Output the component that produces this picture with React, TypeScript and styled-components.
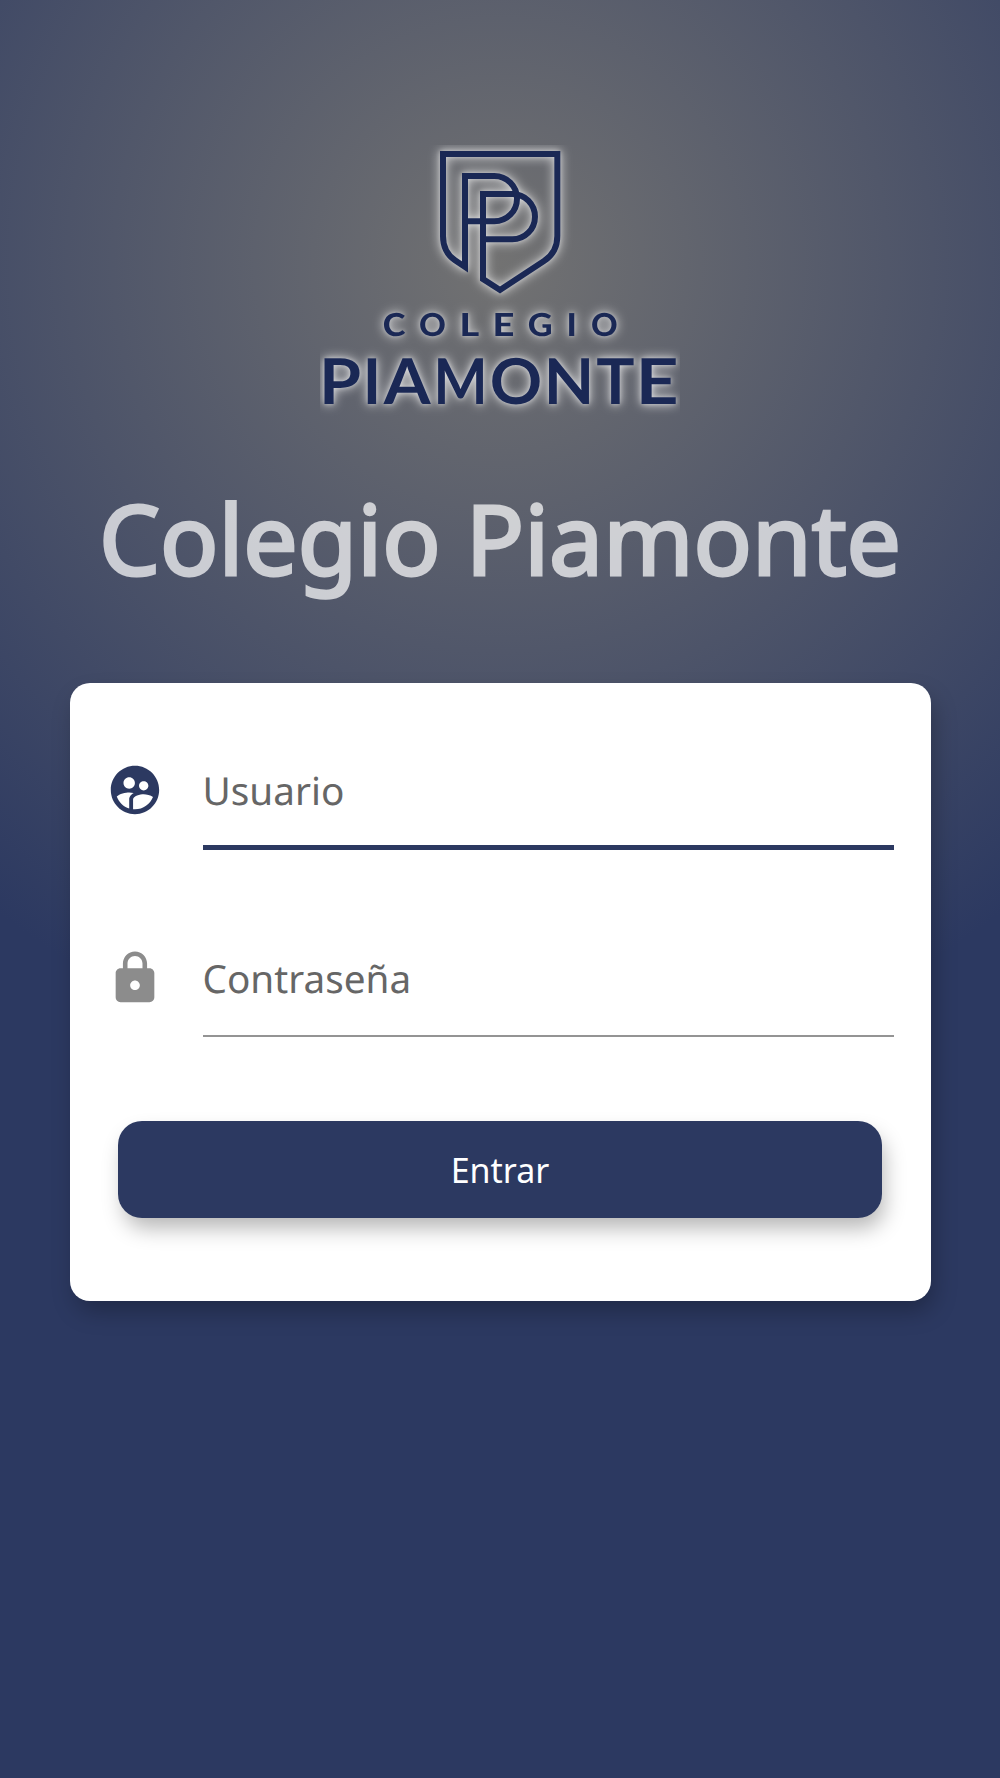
import React from 'react';
import styled, { createGlobalStyle } from 'styled-components';
import { MdLock, MdSupervisedUserCircle } from 'react-icons/md';

const navy = '#2c3961';
const logoBlue = '#1a2855';

const GlobalStyle = createGlobalStyle`
  *, *::before, *::after { box-sizing: border-box; }
  body {
    margin: 0;
    background: ${navy};
    font-family: "Noto Sans", "Open Sans", sans-serif;
    text-rendering: geometricPrecision;
  }
`;

const Page = styled.main`
  display: flex;
  flex-direction: column;
  align-items: center;
  min-height: 1778px;
  padding-top: 145px;
  background: radial-gradient(circle 820px at 50% 264px, #727272 0%, ${navy} 100%);
`;

const Logo = styled.svg`
  display: block;
  flex: none;
  width: 360px;
  height: 276px;
  overflow: hidden;
`;

const Glow = styled.g`
  filter: drop-shadow(0 0 2px rgba(255, 255, 255, 0.4)) drop-shadow(0 0 5.5px rgba(255, 255, 255, 0.8));
`;

const LogoText = styled.text<{ $size: number; $weight: number }>`
  font-family: Lato, sans-serif;
  font-size: ${(p) => p.$size}px;
  font-weight: ${(p) => p.$weight};
  fill: ${logoBlue};
  text-rendering: geometricPrecision;
`;

const Title = styled.h1`
  margin: 52px 0 78px;
  color: #fff;
  opacity: 0.71;
  font-size: 96.6px;
  font-weight: 400;
  line-height: 132px;
  white-space: nowrap;
  -webkit-text-stroke: 3px #fff;
`;

const Card = styled.form`
  display: flex;
  flex-direction: column;
  width: 861px;
  height: 618px;
  padding: 47px 36.5px 0;
  border-radius: 20px;
  background: #fff;
  box-shadow: 4px 12px 23px -2px rgba(0, 0, 0, 0.27);
`;

const Row = styled.div<{ $active?: boolean }>`
  display: flex;
  gap: 38.5px;
  height: 120px;
  color: ${(p) => (p.$active ? navy : '#8c8c8c')};

  & + & {
    margin-top: 68.4px;
    height: 118.6px;
  }
`;

const IconSlot = styled.span`
  display: flex;
  align-items: center;
  height: 120px;
`;

const Field = styled.label<{ $active?: boolean }>`
  width: 691.5px;
  padding-top: 34.7px;
  border-bottom: ${(p) => (p.$active ? `5px solid ${navy}` : '2px solid #949494')};
  color: #666;
  font-size: 38.7px;
  line-height: 53px;
`;

const Submit = styled.button`
  width: 764px;
  height: 97px;
  margin: 83.6px 0 0 12px;
  padding: 1px 0 0;
  border: 0;
  border-radius: 24px;
  background: ${navy};
  color: #fff;
  font: 400 34px/46px "Noto Sans", "Open Sans", sans-serif;
  box-shadow: 4px 12px 21px -2px rgba(0, 0, 0, 0.29);
`;

type Glyph = { ch: string; left: number; right: number; box: [number, number, number] };

// box: ink left, ink right and advance of the glyph, in thousandths of an em
const piamonte: Glyph[] = [
  { ch: 'P', left: 324.7, right: 360, box: [84, 603, 619] },
  { ch: 'I', left: 368, right: 376, box: [84, 213, 297] },
  { ch: 'A', left: 383.7, right: 430.5, box: [0, 695, 695] },
  { ch: 'M', left: 438.3, right: 483, box: [84, 865, 945] },
  { ch: 'O', left: 492.2, right: 540, box: [36, 773, 808] },
  { ch: 'N', left: 549.3, right: 589, box: [84, 690, 771] },
  { ch: 'T', left: 597, right: 634, box: [10, 590, 600] },
  { ch: 'E', left: 641.8, right: 676, box: [84, 540, 575] },
];

const colegio: Glyph[] = [
  { ch: 'C', left: 383.8, right: 405, box: [33, 648, 659] },
  { ch: 'O', left: 420, right: 444.7, box: [33, 778, 811] },
  { ch: 'L', left: 462.3, right: 478.7, box: [74, 508, 522] },
  { ch: 'E', left: 495.3, right: 513, box: [74, 538, 574] },
  { ch: 'G', left: 529, right: 551, box: [33, 675, 725] },
  { ch: 'I', left: 569, right: 574.3, box: [74, 229, 303] },
  { ch: 'O', left: 592, right: 616.5, box: [33, 778, 811] },
];

function Word({ glyphs, y, size, weight }: { glyphs: Glyph[]; y: number; size: number; weight: number }) {
  return (
    <LogoText $size={size} $weight={weight} y={y}>
      {glyphs.map(({ ch, left, right, box: [inkLeft, inkRight, advance] }, i) => {
        const unit = (right - left) / (inkRight - inkLeft);
        return (
          <tspan key={i} x={left - 320 - inkLeft * unit} textLength={advance * unit} lengthAdjust="spacingAndGlyphs">
            {ch}
          </tspan>
        );
      })}
    </LogoText>
  );
}

function SchoolLogo() {
  return (
    <Logo viewBox="0 0 360 276" role="img" aria-label="Colegio Piamonte">
      <Glow>
        <g transform="translate(100 -15) scale(0.33333)" fill="none" stroke={logoBlue} strokeWidth="18" strokeMiterlimit="10">
          <path d="M135 129V411L105 391C82 375 69 350 69 318V72H412V318C412 350 397 377 372 393L240 480L189 447V192H277A68 68 0 0 1 277 328H189" />
          <path d="M126 138H223A68 68 0 0 1 223 274H135" />
        </g>
        <Word glyphs={colegio} y={190.7} size={31.6} weight={900} />
        <Word glyphs={piamonte} y={258.8} size={63.2} weight={700} />
      </Glow>
    </Logo>
  );
}

export default function App() {
  return (
    <>
      <GlobalStyle />
      <Page>
        <SchoolLogo />
        <Title>Colegio Piamonte</Title>
        <Card onSubmit={(e) => e.preventDefault()}>
          <Row $active>
            <IconSlot>
              <MdSupervisedUserCircle size={58} />
            </IconSlot>
            <Field $active>Usuario</Field>
          </Row>
          <Row>
            <IconSlot>
              <MdLock size={58} />
            </IconSlot>
            <Field>Contraseña</Field>
          </Row>
          <Submit type="submit">Entrar</Submit>
        </Card>
      </Page>
    </>
  );
}
